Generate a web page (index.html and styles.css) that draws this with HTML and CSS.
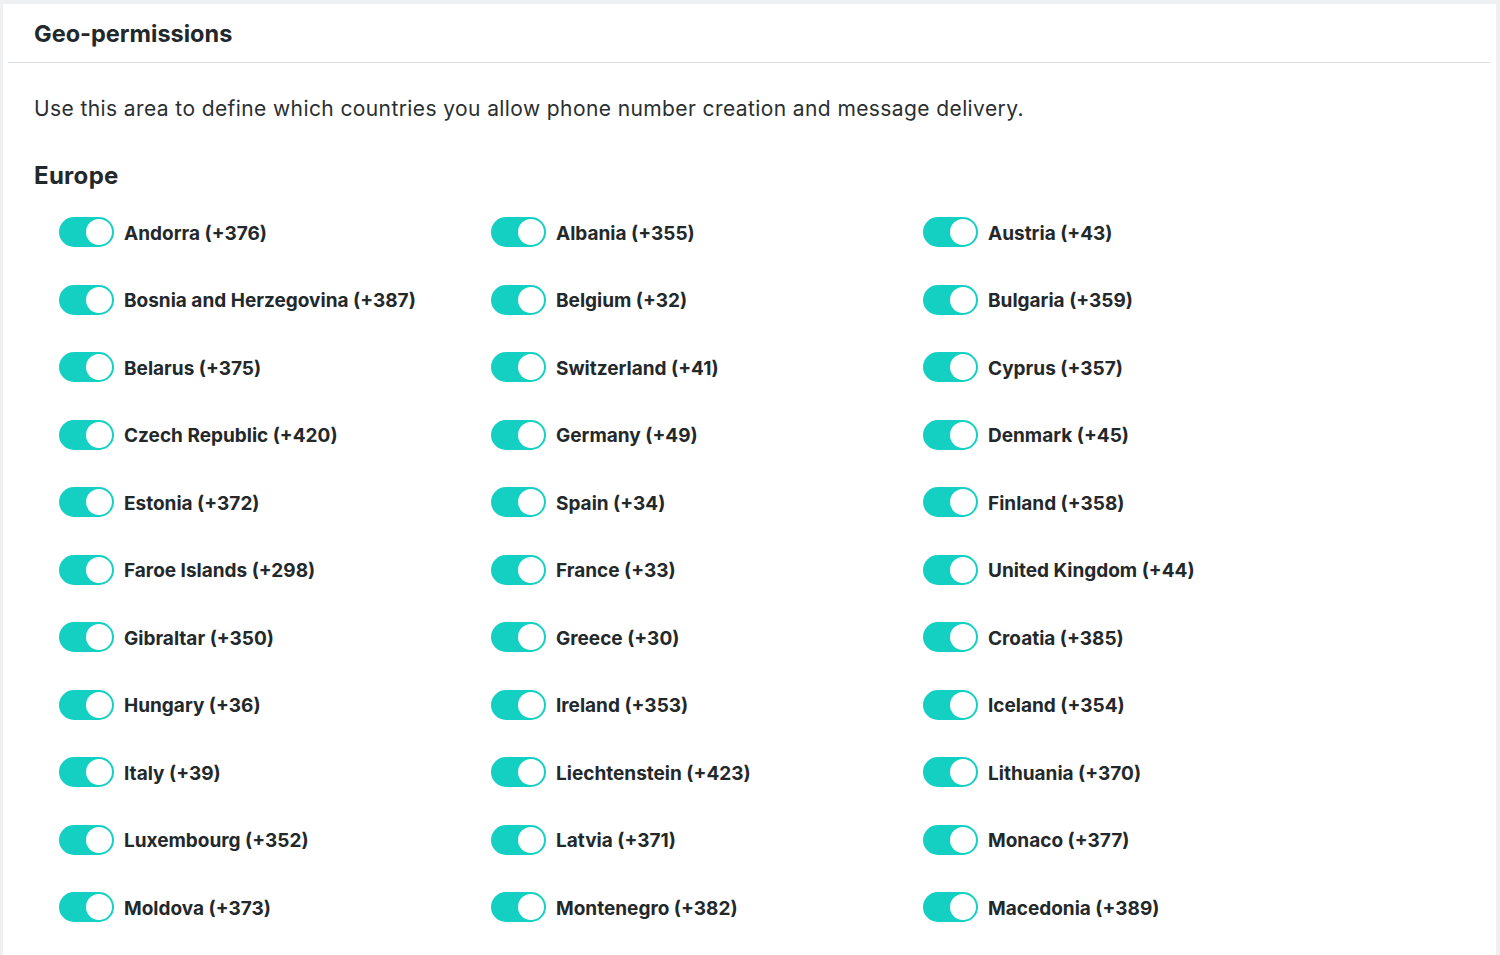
FILE: index.html
```html
<!DOCTYPE html>
<html lang="en">
<head>
<meta charset="utf-8">
<title>Geo-permissions</title>
<link rel="stylesheet" href="styles.css">
</head>
<body>
<div class="card">
  <div class="card-header"><h1 class="title">Geo-permissions</h1></div>
  <div class="card-body">
    <p class="desc">Use this area to define which countries you allow phone number creation and message delivery.</p>
    <h2 class="region">Europe</h2>
    <div class="grid">
      <label class="item"><span class="toggle"><span class="knob"></span></span><span class="name">Andorra (+376)</span></label>
      <label class="item"><span class="toggle"><span class="knob"></span></span><span class="name">Albania (+355)</span></label>
      <label class="item"><span class="toggle"><span class="knob"></span></span><span class="name">Austria (+43)</span></label>
      <label class="item"><span class="toggle"><span class="knob"></span></span><span class="name">Bosnia and Herzegovina (+387)</span></label>
      <label class="item"><span class="toggle"><span class="knob"></span></span><span class="name">Belgium (+32)</span></label>
      <label class="item"><span class="toggle"><span class="knob"></span></span><span class="name">Bulgaria (+359)</span></label>
      <label class="item"><span class="toggle"><span class="knob"></span></span><span class="name">Belarus (+375)</span></label>
      <label class="item"><span class="toggle"><span class="knob"></span></span><span class="name">Switzerland (+41)</span></label>
      <label class="item"><span class="toggle"><span class="knob"></span></span><span class="name">Cyprus (+357)</span></label>
      <label class="item"><span class="toggle"><span class="knob"></span></span><span class="name">Czech Republic (+420)</span></label>
      <label class="item"><span class="toggle"><span class="knob"></span></span><span class="name">Germany (+49)</span></label>
      <label class="item"><span class="toggle"><span class="knob"></span></span><span class="name">Denmark (+45)</span></label>
      <label class="item"><span class="toggle"><span class="knob"></span></span><span class="name">Estonia (+372)</span></label>
      <label class="item"><span class="toggle"><span class="knob"></span></span><span class="name">Spain (+34)</span></label>
      <label class="item"><span class="toggle"><span class="knob"></span></span><span class="name">Finland (+358)</span></label>
      <label class="item"><span class="toggle"><span class="knob"></span></span><span class="name">Faroe Islands (+298)</span></label>
      <label class="item"><span class="toggle"><span class="knob"></span></span><span class="name">France (+33)</span></label>
      <label class="item"><span class="toggle"><span class="knob"></span></span><span class="name">United Kingdom (+44)</span></label>
      <label class="item"><span class="toggle"><span class="knob"></span></span><span class="name">Gibraltar (+350)</span></label>
      <label class="item"><span class="toggle"><span class="knob"></span></span><span class="name">Greece (+30)</span></label>
      <label class="item"><span class="toggle"><span class="knob"></span></span><span class="name">Croatia (+385)</span></label>
      <label class="item"><span class="toggle"><span class="knob"></span></span><span class="name">Hungary (+36)</span></label>
      <label class="item"><span class="toggle"><span class="knob"></span></span><span class="name">Ireland (+353)</span></label>
      <label class="item"><span class="toggle"><span class="knob"></span></span><span class="name">Iceland (+354)</span></label>
      <label class="item"><span class="toggle"><span class="knob"></span></span><span class="name">Italy (+39)</span></label>
      <label class="item"><span class="toggle"><span class="knob"></span></span><span class="name">Liechtenstein (+423)</span></label>
      <label class="item"><span class="toggle"><span class="knob"></span></span><span class="name">Lithuania (+370)</span></label>
      <label class="item"><span class="toggle"><span class="knob"></span></span><span class="name">Luxembourg (+352)</span></label>
      <label class="item"><span class="toggle"><span class="knob"></span></span><span class="name">Latvia (+371)</span></label>
      <label class="item"><span class="toggle"><span class="knob"></span></span><span class="name">Monaco (+377)</span></label>
      <label class="item"><span class="toggle"><span class="knob"></span></span><span class="name">Moldova (+373)</span></label>
      <label class="item"><span class="toggle"><span class="knob"></span></span><span class="name">Montenegro (+382)</span></label>
      <label class="item"><span class="toggle"><span class="knob"></span></span><span class="name">Macedonia (+389)</span></label>
    </div>
  </div>
</div>
</body>
</html>
```

FILE: styles.css
```css
html, body {
  margin: 0;
  padding: 0;
  background: #eef0f1;
  font-family: "Inter", "Liberation Sans", sans-serif;
  color: #23282a;
}

.card {
  margin: 4px 4px 0 3px;
  background: #ffffff;
  height: 951px;
  overflow: hidden;
}

.card-header {
  margin: 0 6px 0 5px;
  height: 58px;
  border-bottom: 1px solid #dcdfe1;
  display: flex;
  align-items: center;
  padding-left: 26px;
}

.title {
  margin: 0;
  font-size: 23.5px;
  font-weight: 700;
  letter-spacing: 0;
}

.card-body {
  padding: 0 31px;
}

.desc {
  margin: 32px 0 0;
  font-size: 21px;
  font-weight: 400;
  line-height: 28px;
  color: #2a2f31;
  letter-spacing: 0.4px;
}

.region {
  margin: 38px 0 0;
  font-size: 24px;
  font-weight: 700;
  line-height: 30px;
  letter-spacing: 0.3px;
}

.grid {
  margin: 26px 0 0 25px;
  display: grid;
  grid-template-columns: repeat(3, 432px);
  row-gap: 37.5px;
}

.item {
  display: flex;
  align-items: center;
  gap: 10px;
  height: 30px;
}

.toggle {
  flex: none;
  width: 55px;
  height: 30px;
  border-radius: 15px;
  background: #14d0c3;
  display: flex;
  align-items: center;
  justify-content: flex-end;
  padding: 0 2px;
  box-sizing: border-box;
}

.knob {
  width: 26px;
  height: 26px;
  border-radius: 50%;
  background: #ffffff;
}

.name {
  font-size: 19px;
  font-weight: 700;
  color: #23282a;
  letter-spacing: 0;
  padding-top: 2px;
}
```
